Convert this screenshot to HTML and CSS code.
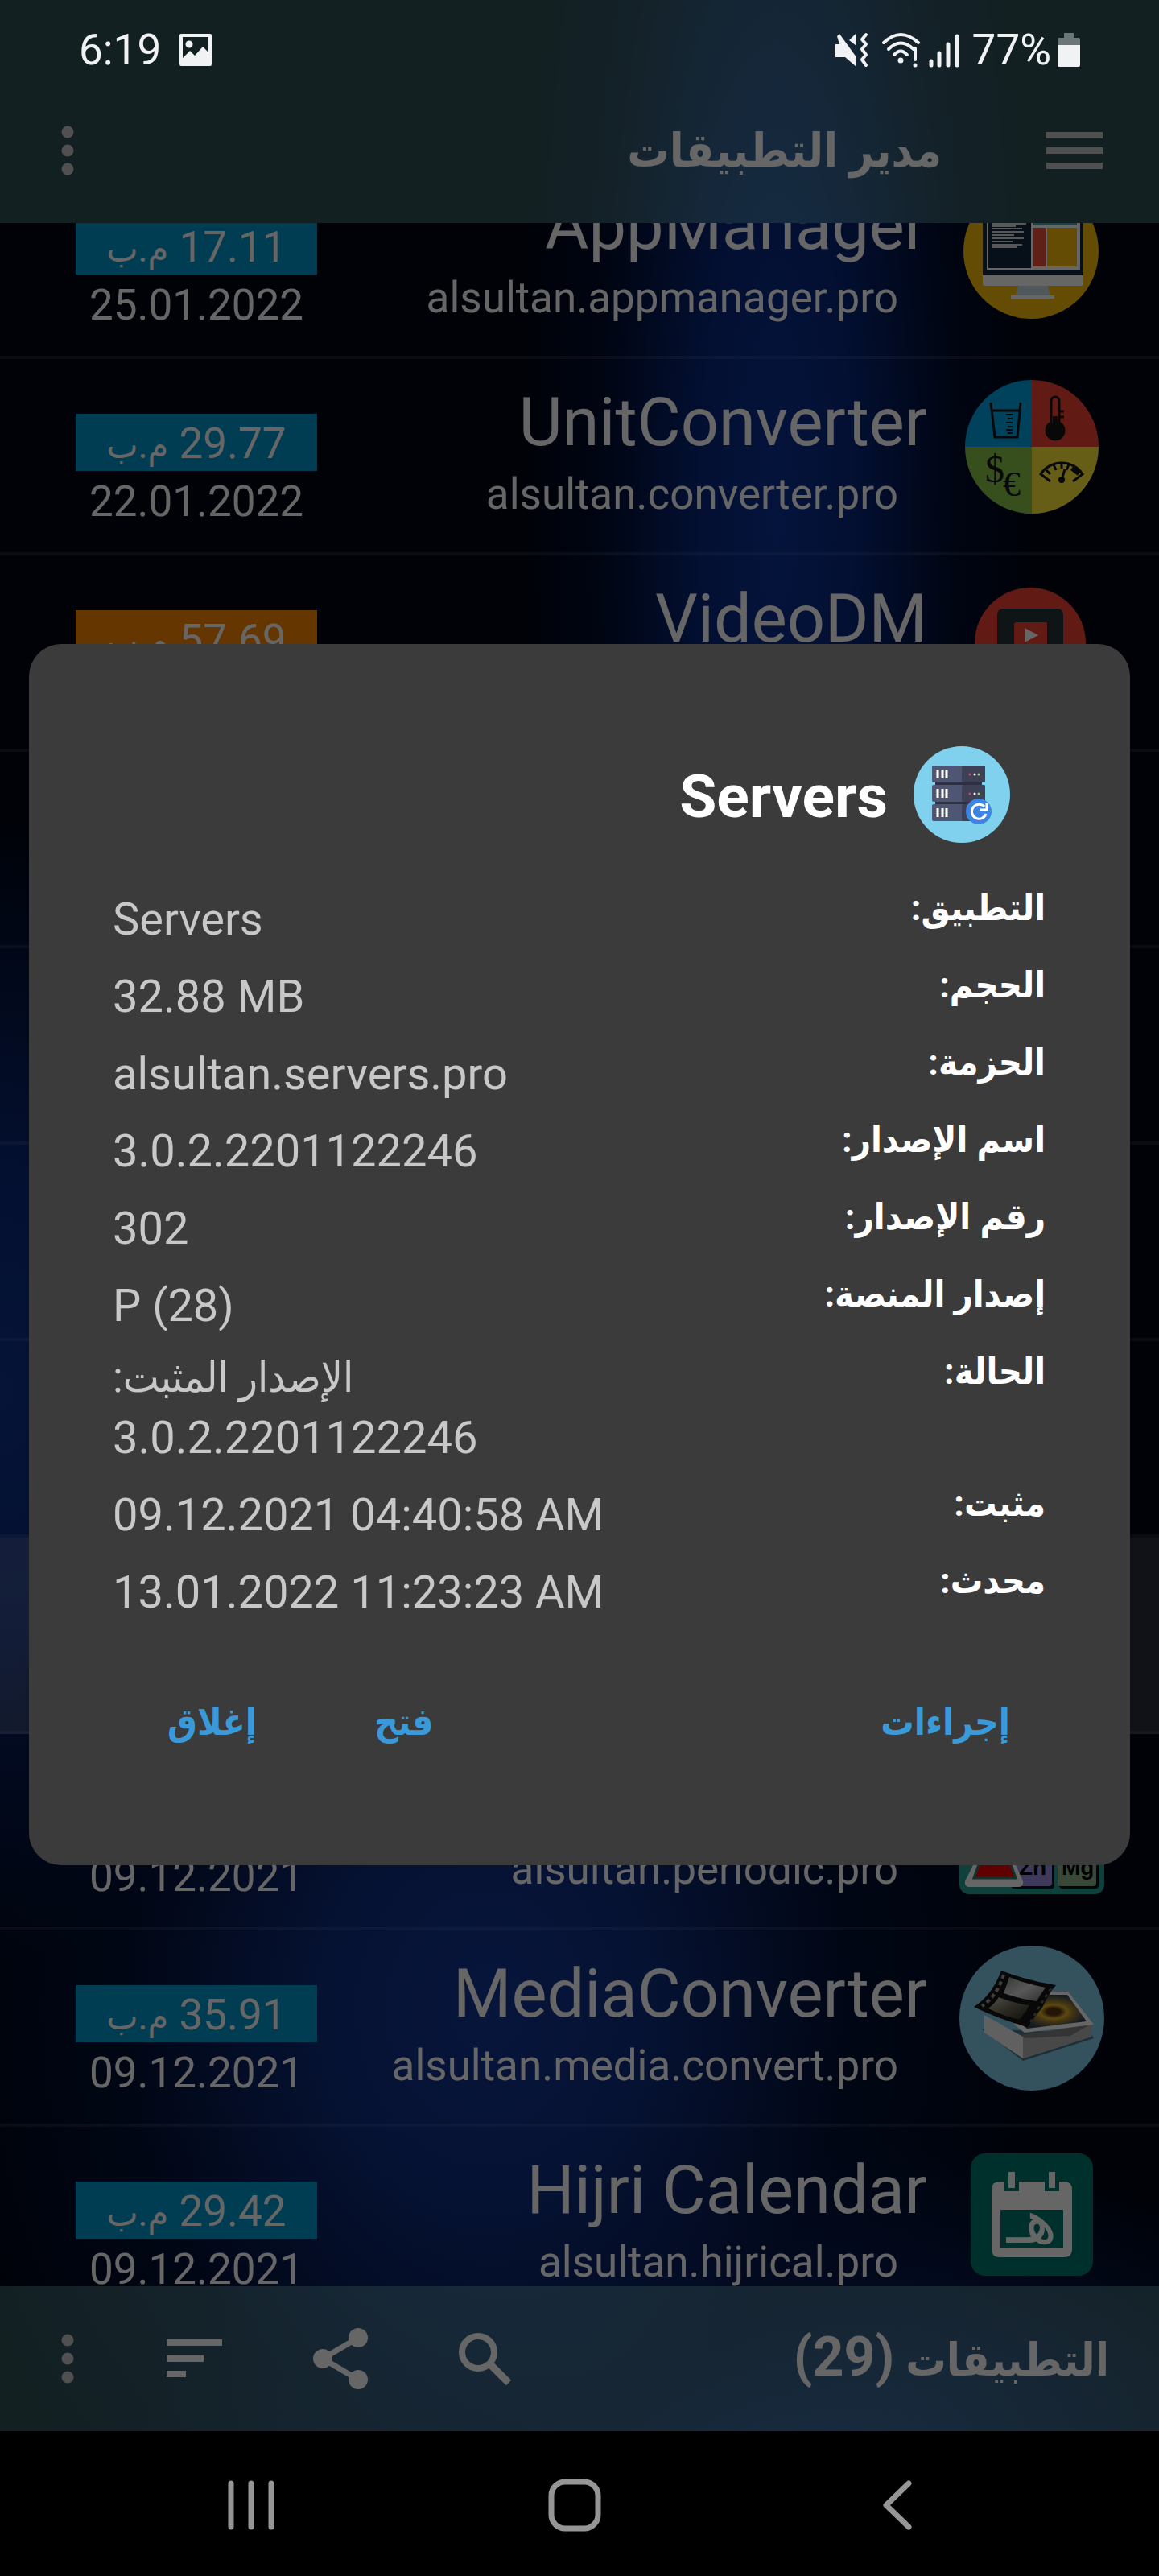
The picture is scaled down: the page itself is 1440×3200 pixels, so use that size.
FILE: index.html
```
<!DOCTYPE html>
<html lang="ar" dir="rtl">
<head>
  <meta charset="UTF-8" />
  <title>مدير التطبيقات</title>
  <meta name="viewport" content="width=device-width, initial-scale=1.0"/>
  <link rel="stylesheet" href="styles.css">
</head>
<body>

<div class="phone">

  <!-- Status bar -->
  <div class="status-bar" dir="ltr">
    <div class="status-group">
      <span>6:19</span>
      <svg width="42" height="42" viewBox="0 0 42 42">
        <path fill="#f0f2f4" fill-rule="evenodd" d="M3 1h36a2 2 0 0 1 2 2v36a2 2 0 0 1-2 2H3a2 2 0 0 1-2-2V3a2 2 0 0 1 2-2zM5 5v26l9-9 6 6 10-11 7 7V5z"/>
        <circle cx="13" cy="14" r="4.500" fill="#f0f2f4"/>
      </svg>
    </div>
    <div class="status-group status-right">
      <svg width="50" height="44" viewBox="0 0 50 44">
        <path fill="#f0f2f4" d="M0 15h5L2 5l3-3 21 29v12L12 31H0zM17 10l9-9v16z"/>
        <path fill="none" stroke="#f0f2f4" stroke-width="4" stroke-linecap="round" stroke-linejoin="round" d="M38 3l-5 6 5 6-5 6 5 7-5 6 5 7"/>
      </svg>
      <svg width="50" height="44" viewBox="0 0 50 44">
        <g fill="none" stroke="#f0f2f4" stroke-width="4" stroke-linecap="round">
          <path d="M2 13q21-20 43 0"/>
          <path d="M8 21q15-15 31 0"/>
          <path d="M15 28q8-9 16 0"/>
        </g>
        <circle cx="23" cy="35" r="3.500" fill="#f0f2f4"/>
        <path stroke="#f0f2f4" stroke-width="4" stroke-linecap="round" d="M41 20v14"/>
        <circle cx="41" cy="41" r="2.500" fill="#f0f2f4"/>
      </svg>
      <svg width="38" height="44" viewBox="0 0 38 44">
        <path stroke="#f0f2f4" stroke-width="5" stroke-linecap="round" d="M3 36v5M13 26v15M24 15v26M35 5v36"/>
      </svg>
      <span class="battery-level">77%</span>
      <svg width="28" height="44" viewBox="0 0 28 44">
        <path fill="#6c7578" d="M8 1h12v6h6q2 0 2 2v8H0V9q0-2 2-2h6z"/>
        <path fill="#f0f2f4" d="M0 16h28v25q0 2-2 2H2q-2 0-2-2z"/>
      </svg>
    </div>
  </div>

  <!-- Toolbar -->
  <header class="toolbar">
    <button class="icon-button" aria-label="القائمة">
      <svg width="70" height="48" viewBox="0 0 70 48"><path fill="#c8c8c8" d="M0 1h70v8H0zM0 20h70v8H0zM0 39h70v8H0z"/></svg>
    </button>
    <h1>مدير التطبيقات</h1>
    <button class="icon-button" aria-label="المزيد">
      <svg width="16" height="62" viewBox="0 0 16 62"><g fill="#c8c8c8"><circle cx="8" cy="8" r="7.500"/><circle cx="8" cy="31" r="7.500"/><circle cx="8" cy="54" r="7.500"/></g></svg>
    </button>
  </header>

  <!-- App list -->
  <main class="app-list">
    <ul>
      <li class="app">
        <svg class="app-icon" viewBox="0 0 180 180">
          <circle cx="89" cy="91" r="84" fill="#fabe0a"/>
          <path fill="#12283c" d="M29 30h125v92H29z"/>
          <path fill="#fff" d="M29 121h125v10q0 3-3 3H32q-3 0-3-3z"/>
          <path fill="#c8dce6" d="M73 134h37l3 13H70z"/>
          <path fill="#fff" d="M64 146h54v4H64z"/>
          <path fill="#fff" d="M34 36h116v79H34z"/>
          <path fill="#12283c" d="M36 38h53v74H36z"/>
          <path fill="#28b4b4" d="M91 38h55v21H91z"/>
          <path fill="#f0503c" d="M91 62h16v48H91z"/>
          <path fill="#fabe0a" d="M109 62h37v48h-37z"/>
          <path stroke="#dcdcdc" stroke-width="2" d="M40 57h43M40 60h30M40 63h38M40 67h40M40 71h28M40 75h40M40 79h26M40 83h38M40 86h32"/>
        </svg>
        <div class="app-text">
          <h2>AppManager</h2>
          <p>alsultan.appmanager.pro</p>
        </div>
        <div class="app-meta">
          <span class="badge">17.11 <bdi>م.ب</bdi></span>
          <time>25.01.2022</time>
        </div>
      </li>
      <li class="app">
        <svg class="app-icon" viewBox="0 0 180 180">
          <path fill="#00a5e6" d="M90 90V7A83 83 0 0 0 7 90z"/>
          <path fill="#f44336" d="M90 90V7a83 83 0 0 1 83 83z"/>
          <path fill="#8bc34a" d="M90 90H7a83 83 0 0 0 83 83z"/>
          <path fill="#ffeb3b" d="M90 90h83a83 83 0 0 1-83 83z"/>
          <path fill="none" stroke="#161616" stroke-width="3" d="M39 35l5 43h28l4-43M40 45h35"/>
          <path stroke="#161616" stroke-width="2" d="M58 50h8M60 55h6M58 60h8M60 65h6M58 69h8M60 73h6"/>
          <path fill="none" stroke="#161616" stroke-width="3" d="M114 60V33a5 5 0 0 1 10 0v27a11 11 0 1 1-10 0zM124 46h6M124 53h6"/>
          <circle cx="119" cy="70" r="10" fill="#161616"/>
          <path stroke="#161616" stroke-width="6" d="M119 52v15"/>
          <text class="glyph" x="32" y="134" font-size="48">$</text>
          <text class="glyph" x="54" y="151" font-size="44">€</text>
          <path fill="none" stroke="#161616" stroke-width="3" d="M113 133l-12-9a31 31 0 0 1 52 0l-12 9M127 110v7M117 112l3 7M108 119l5 5M136 112l-3 7"/>
          <path stroke="#161616" stroke-width="7" d="M140 116l9 7"/>
          <path stroke="#161616" stroke-width="3" d="M127 131l4-13"/>
          <circle cx="127" cy="131" r="4" fill="#161616"/>
        </svg>
        <div class="app-text">
          <h2>UnitConverter</h2>
          <p>alsultan.converter.pro</p>
        </div>
        <div class="app-meta">
          <span class="badge">29.77 <bdi>م.ب</bdi></span>
          <time>22.01.2022</time>
        </div>
      </li>
      <li class="app">
        <svg class="app-icon" viewBox="0 0 180 180">
          <circle cx="88" cy="90" r="69" fill="#f44336"/>
          <rect x="47" y="47" width="82" height="86" rx="7" fill="#263238"/>
          <rect x="68" y="64" width="41" height="52" rx="2" fill="#f44336"/>
          <path fill="#fff" d="M81 71l17 9-17 9z"/>
        </svg>
        <div class="app-text">
          <h2>VideoDM</h2>
        </div>
        <div class="app-meta">
          <span class="badge badge-large">57.69 <bdi>م.ب</bdi></span>
        </div>
      </li>
      <li class="app"></li>
      <li class="app"></li>
      <li class="app"></li>
      <li class="app"></li>
      <li class="app app-selected"></li>
      <li class="app">
        <svg class="app-icon" viewBox="0 0 180 180">
          <rect width="180" height="180" rx="12" fill="#2aa096"/>
          <rect x="64" y="112" width="54" height="61" rx="4" fill="#111"/>
          <rect x="62" y="110" width="53" height="60" rx="4" fill="#9f90e6"/>
          <rect x="124" y="112" width="49" height="61" rx="4" fill="#111"/>
          <rect x="122" y="110" width="48" height="60" rx="4" fill="#8fb58c"/>
          <text class="element" x="74" y="156" font-size="28">Zn</text>
          <text class="element" x="127" y="156" font-size="28">Mg</text>
          <path fill="#fff" d="M24 130h40l15 34q1 7-5 7H12q-6 0-5-7z"/>
          <path fill="#f00000" stroke="#2a7a76" stroke-width="3" d="M28 132h32l10 28H18z"/>
        </svg>
        <div class="app-text">
          <h2>&nbsp;</h2>
          <p>alsultan.periodic.pro</p>
        </div>
        <div class="app-meta">
          <span class="badge">&nbsp;</span>
          <time>09.12.2021</time>
        </div>
      </li>
      <li class="app">
        <svg class="app-icon" viewBox="0 0 180 180">
          <defs>
            <radialGradient id="sunflower">
              <stop offset="0.200" stop-color="#5a3214"/>
              <stop offset="0.400" stop-color="#e6b428"/>
              <stop offset="0.600" stop-color="#a08232"/>
              <stop offset="1" stop-color="#324155"/>
            </radialGradient>
            <linearGradient id="frame" x1="0" y1="0" x2="1" y2="1">
              <stop offset="0" stop-color="#8c8c8c"/>
              <stop offset="0.500" stop-color="#dcdcdc"/>
              <stop offset="1" stop-color="#787878"/>
            </linearGradient>
            <linearGradient id="frame-dark" x1="0" y1="0" x2="1" y2="1">
              <stop offset="0" stop-color="#c8c8b4"/>
              <stop offset="0.500" stop-color="#6e6955"/>
              <stop offset="1" stop-color="#282828"/>
            </linearGradient>
          </defs>
          <circle cx="90" cy="90" r="90" fill="#7fcdeb"/>
          <path fill="#4b7887" d="M27 103l52 40 88-28-4-6z"/>
          <path fill="#f0f0f0" d="M31 86l48 27 85-17v17l-85 27-48-32z"/>
          <path fill="#b4b4b4" d="M79 113l85-17v17l-85 27z"/>
          <path fill="#828282" d="M78 111l84-13-24 14-57 3z"/>
          <path fill="#fff" d="M110 57l25 0 32 41-86 10-13-10z"/>
          <path fill="url(#sunflower)" d="M108 61l26 0 24 33-74 9-8-6z"/>
          <path fill="#141414" d="M52 31q34 13 68 18-9 10-17 28-9 10-18 24-34-9-67-25 23-15 34-45z"/>
          <path fill="url(#frame)" d="M62 39q22 9 45 13-6 8-11 17-22-3-41-10 3-8 7-20z"/>
          <path fill="url(#frame-dark)" d="M49 64q20 8 38 10-5 10-13 18-20-5-38-14 7-5 13-14z"/>
          <path fill="none" stroke="#a0a0a0" stroke-width="4" stroke-dasharray="5 4" d="M55 36q-8 26-27 39"/>
          <path fill="none" stroke="#646464" stroke-width="3" stroke-dasharray="4 5" d="M114 53q-15 22-26 43"/>
        </svg>
        <div class="app-text">
          <h2>MediaConverter</h2>
          <p>alsultan.media.convert.pro</p>
        </div>
        <div class="app-meta">
          <span class="badge">35.91 <bdi>م.ب</bdi></span>
          <time>09.12.2021</time>
        </div>
      </li>
      <li class="app">
        <svg class="app-icon" viewBox="0 0 180 180">
          <rect x="14" y="14" width="152" height="152" rx="18" fill="#00796b"/>
          <path fill="#fff" fill-rule="evenodd" d="M50 49h80q10 0 10 10v74q0 10-10 10H50q-10 0-10-10V59q0-10 10-10zM51 84v47h78V84z"/>
          <path fill="#00796b" d="M56 45h18v16H56zM106 45h18v16h-18z"/>
          <path fill="#fff" d="M61 37h8v20h-8zM111 37h8v20h-8z"/>
          <text class="hijri" x="90" y="125" font-size="76">هـ</text>
        </svg>
        <div class="app-text">
          <h2>Hijri Calendar</h2>
          <p>alsultan.hijrical.pro</p>
        </div>
        <div class="app-meta">
          <span class="badge">29.42 <bdi>م.ب</bdi></span>
          <time>09.12.2021</time>
        </div>
      </li>
    </ul>
  </main>

  <!-- Bottom toolbar -->
  <footer class="bottom-bar">
    <h3>التطبيقات <span>(29)</span></h3>
    <div class="bottom-actions" dir="ltr">
      <button class="icon-button" aria-label="المزيد">
        <svg width="16" height="62" viewBox="0 0 16 62"><g fill="#c8c8c8"><circle cx="8" cy="8" r="7.500"/><circle cx="8" cy="31" r="7.500"/><circle cx="8" cy="54" r="7.500"/></g></svg>
      </button>
      <button class="icon-button" aria-label="ترتيب">
        <svg width="72" height="48" viewBox="0 0 72 48"><path fill="#fff" d="M3 0h69v8H3zM3 20h46v8H3zM3 39h24v8H3z"/></svg>
      </button>
      <button class="icon-button" aria-label="مشاركة">
        <svg width="70" height="76" viewBox="0 0 70 76">
          <path fill="none" stroke="#fff" stroke-width="7" d="M57 12L13 38l44 26"/>
          <g fill="#fff"><circle cx="57" cy="12" r="12"/><circle cx="13" cy="38" r="12"/><circle cx="57" cy="64" r="12"/></g>
        </svg>
      </button>
      <button class="icon-button" aria-label="بحث">
        <svg width="68" height="68" viewBox="0 0 68 68">
          <circle cx="24" cy="26" r="20" fill="none" stroke="#fff" stroke-width="8"/>
          <path stroke="#fff" stroke-width="9" d="M40 42l22 22"/>
        </svg>
      </button>
    </div>
  </footer>

  <!-- System navigation -->
  <nav class="system-nav" dir="ltr">
    <button class="icon-button" aria-label="الأخيرة">
      <svg width="60" height="64" viewBox="0 0 60 64"><path stroke="#959595" stroke-width="7" stroke-linecap="round" d="M5 5v54M30 5v54M55 5v54"/></svg>
    </button>
    <button class="icon-button" aria-label="الرئيسية">
      <svg width="74" height="66" viewBox="0 0 74 66"><rect x="4" y="4" width="58" height="58" rx="17" fill="none" stroke="#959595" stroke-width="7"/></svg>
    </button>
    <button class="icon-button" aria-label="رجوع">
      <svg width="40" height="64" viewBox="0 0 40 64"><path fill="none" stroke="#959595" stroke-width="7" stroke-linecap="round" stroke-linejoin="round" d="M35 5L7 32l28 27"/></svg>
    </button>
  </nav>

  <!-- App details dialog -->
  <div class="overlay">
    <section class="dialog" role="dialog" aria-labelledby="dialog-title">
      <div class="dialog-header">
        <svg width="120" height="120" viewBox="0 0 120 120">
          <circle cx="60" cy="60" r="60" fill="#7fd1ee"/>
          <path fill="#2d3045" d="M27 40h58v38H27z"/>
          <g fill="#4e5673">
            <rect x="23" y="24" width="66" height="21" rx="2"/>
            <rect x="23" y="48" width="66" height="21" rx="2"/>
            <rect x="23" y="72" width="66" height="21" rx="2"/>
          </g>
          <g fill="#3e4056">
            <rect x="60" y="24" width="29" height="21" rx="2"/>
            <rect x="60" y="48" width="29" height="21" rx="2"/>
            <rect x="60" y="72" width="29" height="21" rx="2"/>
          </g>
          <path stroke="#fff" stroke-width="3" d="M30 29v11M36 29v11M41 29v11M30 53v11M36 53v11M41 53v11M30 77v11M36 77v11M41 77v11"/>
          <g fill="#d2466e"><circle cx="70" cy="35" r="1.500"/><circle cx="70" cy="59" r="1.500"/></g>
          <g fill="#fff"><circle cx="76" cy="35" r="1.500"/><circle cx="76" cy="59" r="1.500"/></g>
          <g fill="#8cdc64"><circle cx="81" cy="35" r="1.500"/><circle cx="81" cy="59" r="1.500"/></g>
          <circle cx="81" cy="81" r="16" fill="#3d85e0"/>
          <path fill="none" stroke="#fff" stroke-width="3" d="M90 84a9 9 0 1 1-2-9M91 71v8h-8"/>
        </svg>
        <h2 id="dialog-title">Servers</h2>
      </div>

      <dl class="details">
        <div><dt>التطبيق:</dt><dd>Servers</dd></div>
        <div><dt>الحجم:</dt><dd>32.88 MB</dd></div>
        <div><dt>الحزمة:</dt><dd>alsultan.servers.pro</dd></div>
        <div><dt>اسم الإصدار:</dt><dd>3.0.2.2201122246</dd></div>
        <div><dt>رقم الإصدار:</dt><dd>302</dd></div>
        <div><dt>إصدار المنصة:</dt><dd>P (28)</dd></div>
        <div><dt>الحالة:</dt><dd><span class="state" dir="rtl">الإصدار المثبت:</span>3.0.2.2201122246</dd></div>
        <div><dt>مثبت:</dt><dd>09.12.2021 04:40:58 AM</dd></div>
        <div><dt>محدث:</dt><dd>13.01.2022 11:23:23 AM</dd></div>
      </dl>

      <div class="dialog-actions">
        <button>إجراءات</button>
        <span class="spacer"></span>
        <button>فتح</button>
        <button>إغلاق</button>
      </div>
    </section>
  </div>

</div>

</body>
</html>
```
FILE: styles.css
```
* {
  box-sizing: border-box;
}

body, h1, h2, h3, p, ul, dl, dd {
  margin: 0;
}

body {
  background-color: #000;
  color: #fff;
  font-family: Roboto, 'DejaVu Sans Condensed', 'DejaVu Sans', sans-serif;
  font-size: 53px;
  line-height: 62px;
}

svg {
  display: block;
  flex: none;
}

button {
  border: none;
  padding: 0;
  background: none;
  font: inherit;
  cursor: pointer;
}

.phone {
  position: relative;
  height: 100vh;
  display: flex;
  flex-direction: column;
  overflow: hidden;
  background-color: #000616;
  background-image:
    radial-gradient(ellipse 22% 44% at 67% 20%, #0c3296 0%, #08287d 30%, rgba(4, 20, 70, 0.5) 70%, transparent 100%),
    radial-gradient(ellipse 48% 26% at 42% 78%, #143796 0%, #0f2d7d 30%, rgba(6, 24, 75, 0.6) 65%, transparent 100%),
    radial-gradient(ellipse 30% 22% at 0 54%, #0f328c 0%, #0a2878 40%, transparent 100%),
    radial-gradient(ellipse 55% 12% at 66% 95%, #143291 0%, transparent 100%);
}

/* STATUS BAR */
.status-bar {
  height: 96px;
  flex: none;
  padding: 26px 98px 0;
  display: flex;
  justify-content: space-between;
}

.status-group {
  display: flex;
  align-items: center;
  gap: 22px;
  height: 72px;
  position: relative;
  z-index: 2;
  color: #f0f2f4;
}

.status-right {
  gap: 8px;
}

.battery-level {
  padding-left: 8px;
}

/* TOOLBARS */
.status-bar, .toolbar, .bottom-bar {
  background-color: rgba(150, 230, 220, 0.33);
}

.toolbar {
  height: 181px;
  flex: none;
  padding: 0 70px 0 76px;
  display: flex;
  align-items: center;
}

.toolbar h1 {
  flex: 1;
  padding-right: 130px;
  font-size: 58px;
  line-height: 72px;
}

.bottom-bar {
  height: 180px;
  flex: none;
  padding: 0 62px 0 76px;
  display: flex;
  justify-content: space-between;
  align-items: center;
}

.bottom-bar h3 {
  font-size: 56px;
  line-height: 72px;
}

.bottom-bar h3 span {
  font-size: 68px;
}

.bottom-actions {
  display: flex;
  align-items: center;
  gap: 112px;
}

/* APP LIST */
.app-list {
  flex: 1;
  min-height: 0;
  overflow: hidden;
}

/* list is scrolled a little under the toolbar */
.app-list ul {
  margin-top: -75px;
  padding: 0;
  list-style: none;
}

.app {
  height: 244px;
  padding: 0 68px 0 94px;
  display: flex;
  gap: 40px;
  border-bottom: 4px solid rgba(255, 255, 255, 0.09);
}

.app-selected {
  background-color: rgba(255, 255, 255, 0.16);
}

.app-icon {
  width: 180px;
  height: 180px;
  margin-top: 19px;
}

.app-text {
  flex: 1;
  padding-top: 31px;
}

.app-text h2 {
  font-size: 83px;
  line-height: 96px;
  font-weight: 400;
}

.app-text p {
  margin-top: 10px;
  padding-right: 36px;
}

.app-meta {
  width: 300px;
  padding-top: 68px;
  text-align: center;
}

.badge {
  display: block;
  height: 71px;
  margin-bottom: 7px;
  padding-top: 6px;
  background-color: #0099cc;
}

.badge bdi {
  font-size: 46px;
}

.badge-large {
  background-color: #ff8800;
}

.glyph {
  font-family: 'Liberation Serif', serif;
  fill: #161616;
  direction: ltr;
}

.element {
  font-family: 'Liberation Sans', sans-serif;
  font-weight: bold;
  fill: #000;
  direction: ltr;
}

.hijri {
  font-family: 'DejaVu Sans', sans-serif;
  fill: #fff;
  text-anchor: middle;
}

/* SYSTEM NAVIGATION */
.system-nav {
  height: 180px;
  flex: none;
  padding: 4px 306px 0 282px;
  display: flex;
  justify-content: space-between;
  align-items: center;
  background-color: #000;
  position: relative;
  z-index: 2;
}

/* DIALOG */
.overlay {
  position: absolute;
  inset: 0;
  z-index: 1;
  padding: 96px 36px 180px;
  display: flex;
  align-items: center;
  background-color: rgba(0, 0, 0, 0.6);
}

.dialog {
  width: 100%;
  padding: 127px 105px 138px 104px;
  border-radius: 40px;
  background-color: #3b3b3b;
}

.dialog-header {
  display: flex;
  align-items: center;
  gap: 32px;
  padding-right: 44px;
  margin-bottom: 62px;
}

.dialog-header h2 {
  padding-top: 4px;
  font-size: 75px;
  line-height: 88px;
}

.details div {
  display: flex;
  justify-content: space-between;
  align-items: flex-start;
  padding-bottom: 30px;
}

.details dt {
  font-size: 45px;
  line-height: 38px;
  font-weight: bold;
}

.details dd {
  direction: ltr;
  font-size: 56px;
  line-height: 66px;
  color: #c8c8c8;
}

.details .state {
  display: block;
  margin-bottom: 16px;
  font-size: 53px;
  line-height: 52px;
  text-align: left;
}

.dialog-actions {
  display: flex;
  gap: 146px;
  padding: 58px 44px 0 68px;
}

.dialog-actions button {
  color: #3a9ad9;
  font-size: 46px;
  line-height: 80px;
  font-weight: bold;
}

.spacer {
  flex: 1;
}
```
